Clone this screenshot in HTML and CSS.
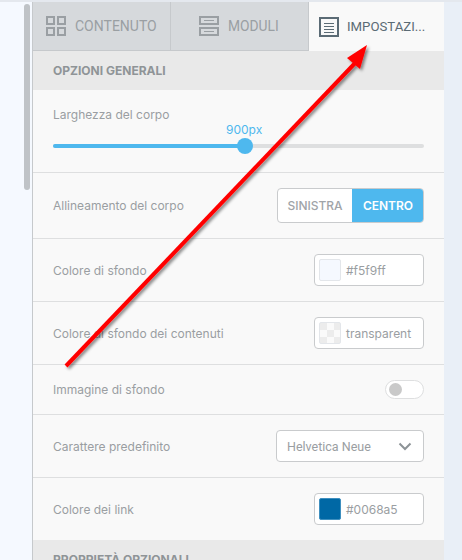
FILE: index.html
```html
<!DOCTYPE html>
<html lang="it">
<head>
<meta charset="utf-8">
<title>Impostazioni</title>
<link rel="stylesheet" href="styles.css">
</head>
<body>
<div class="page">
  <div class="gutter"><div class="scrollbar"></div></div>
  <div class="panel">
    <div class="tabs">
      <div class="tab tab-content">
        <svg class="tab-icon" width="20" height="20" viewBox="0 0 20 20"><g fill="none" stroke="#9a9fa3" stroke-width="2"><rect x="1" y="1" width="7" height="7"/><rect x="12" y="1" width="7" height="7"/><rect x="1" y="12" width="7" height="7"/><rect x="12" y="12" width="7" height="7"/></g></svg>
        <span>CONTENUTO</span>
      </div>
      <div class="tab tab-modules">
        <svg class="tab-icon" width="20" height="20" viewBox="0 0 20 20"><g fill="none" stroke="#9a9fa3" stroke-width="2"><rect x="1" y="1" width="18" height="7"/><rect x="1" y="12" width="18" height="7"/><path d="M5 4.5h10M5 15.5h10" stroke-width="1"/></g></svg>
        <span>MODULI</span>
      </div>
      <div class="tab tab-settings">
        <svg class="tab-icon" width="20" height="20" viewBox="0 0 20 20"><g fill="none" stroke="#5b6b75"><rect x="1" y="1" width="18" height="18" stroke-width="2"/><path d="M5 6.5h10M5 9.5h10M5 12.5h10M5 15.5h10" stroke-width="1"/></g></svg>
        <span>IMPOSTAZI...</span>
      </div>
    </div>

    <div class="section-head">OPZIONI GENERALI</div>

    <div class="row row-slider">
      <div class="label">Larghezza del corpo</div>
      <div class="slider">
        <div class="slider-value">900px</div>
        <div class="track"><div class="fill"></div><div class="thumb"></div></div>
      </div>
    </div>

    <div class="row row-align">
      <div class="label">Allineamento del corpo</div>
      <div class="segmented"><div class="seg">SINISTRA</div><div class="seg seg-on">CENTRO</div></div>
    </div>

    <div class="row row-std">
      <div class="label">Colore di sfondo</div>
      <div class="color"><span class="swatch swatch-light"></span><span>#f5f9ff</span></div>
    </div>

    <div class="row row-std">
      <div class="label">Colore di sfondo dei contenuti</div>
      <div class="color"><span class="swatch swatch-check"></span><span>transparent</span></div>
    </div>

    <div class="row row-toggle">
      <div class="label">Immagine di sfondo</div>
      <div class="toggle"><span class="knob"></span></div>
    </div>

    <div class="row row-std">
      <div class="label">Carattere predefinito</div>
      <div class="select"><span>Helvetica Neue</span>
        <svg width="14" height="9" viewBox="0 0 14 9"><path d="M1.5 1.5 7 7l5.5-5.5" fill="none" stroke="#8d9397" stroke-width="2"/></svg>
      </div>
    </div>

    <div class="row row-last">
      <div class="label">Colore dei link</div>
      <div class="color"><span class="swatch swatch-blue"></span><span>#0068a5</span></div>
    </div>

    <div class="section-head section-second">PROPRIETÀ OPZIONALI</div>
  </div>
  <div class="margin-right"></div>
</div>

<svg class="arrow" width="462" height="560" viewBox="0 0 462 560">
  <defs><filter id="sh" x="-10%" y="-10%" width="120%" height="120%"><feDropShadow dx="2" dy="2" stdDeviation="1.5" flood-color="#000" flood-opacity=".45"/></filter></defs>
  <g filter="url(#sh)">
    <path d="M66 366 358 60" stroke="#ff0000" stroke-width="4" fill="none"/>
    <path d="M367 45 347 58 360 69Z" fill="#ff0000"/>
  </g>
</svg>
</body>
</html>
```
FILE: styles.css
```css
* { box-sizing: border-box; }
html, body { margin: 0; padding: 0; }
body { width: 462px; height: 560px; overflow: hidden; background: #e9eff7; font-family: Inter, "Liberation Sans", sans-serif; position: relative; }
.page { display: flex; height: 560px; padding-top: 2px; background: linear-gradient(#e4e8ee, #e4e8ee) top / 100% 2px no-repeat; }
.gutter { width: 32px; flex: none; background: #f5f9ff; padding-left: 24px; }
.scrollbar { width: 6px; height: 186px; margin-top: 2px; background: #bfc3c7; border-radius: 3px; }
.panel { width: 412px; flex: none; background: #f9f9f9; border-left: 1px solid #c6c9cc; overflow: hidden; }
.margin-right { flex: 1; background: #e9eff7; }

.tabs { display: flex; height: 49px; }
.tab { display: flex; align-items: center; font-family: Roboto, sans-serif; font-size: 14px; color: #9a9fa3; background: #d6d9dc; border-bottom: 1px solid #c6c9cc; }
.tab-icon { flex: none; }
.tab-content { width: 138px; padding-left: 13px; gap: 9px; border-right: 1px solid #c6c9cc; }
.tab-modules { width: 138px; padding-left: 28px; gap: 9px; border-right: 1px solid #c6c9cc; font-size: 13.8px; }
.tab-settings { flex: 1; padding-left: 10px; gap: 8px; background: #f9f9f9; border-bottom: 0; color: #5b6b75; font-size: 13.2px; }

.section-head { height: 39px; display: flex; align-items: center; padding-left: 20px; background: #e9e9e9; font-size: 12px; font-weight: 700; color: #8f9497; }
.section-second { height: 39px; }

.row { display: flex; align-items: center; justify-content: space-between; padding: 0 20px; border-bottom: 1px solid #dedfe0; }
.label { font-size: 12px; line-height: 15px; color: #9a9ea2; }
.row-slider { height: 83px; display: block; padding-top: 17px; }
.row-align { height: 66px; }
.row-std { height: 63px; }
.row-toggle { height: 50px; }
.row-last { height: 62px; border-bottom: 0; }

.slider { position: relative; height: 30px; }
.slider-value { position: absolute; left: 173px; top: 0; font-size: 12px; color: #4eb8ee; line-height: 16px; }
.track { position: absolute; left: 0; right: 0; top: 22px; height: 4px; border-radius: 2px; background: #dedfe0; }
.fill { width: 192px; height: 4px; border-radius: 2px; background: #4eb8ee; }
.thumb { position: absolute; left: 184px; top: -6px; width: 16px; height: 16px; border-radius: 50%; background: #4eb8ee; }

.segmented { display: flex; height: 35px; font-size: 12px; font-weight: 500; border-radius: 4px; overflow: hidden; border: 1px solid #c9cbcd; background: #fff; }
.seg { display: flex; align-items: center; justify-content: center; width: 74px; color: #a0a4a8; }
.seg-on { width: 72px; margin: -1px -1px -1px 0; background: #4eb8ee; color: #fff; font-weight: 600; }

.color { width: 110px; height: 32px; display: flex; align-items: center; gap: 5px; padding-left: 4px; background: #fff; border: 1px solid #c9cbcd; border-radius: 4px; font-size: 12px; color: #9a9ea2; }
.swatch { width: 22px; height: 22px; flex: none; border: 1px solid #e3e6ea; border-radius: 2px; }
.swatch-light { background: #f5f9ff; }
.swatch-blue { background: #0068a5; border-color: #3e8fbf; }
.swatch-check { background: conic-gradient(#fafafa 25%, #ececec 0 50%, #fafafa 0 75%, #ececec 0) 0 0 / 14px 14px; }

.toggle { width: 39px; height: 19px; display: flex; align-items: center; padding-left: 3px; border: 1px solid #dedfe0; border-radius: 10px; background: #fff; }
.knob { width: 13px; height: 13px; border-radius: 50%; background: #c9c9c9; }

.select { width: 148px; height: 32px; display: flex; align-items: center; justify-content: space-between; padding: 0 11px 0 10px; background: #fff; border: 1px solid #c9cbcd; border-radius: 4px; font-family: Roboto, sans-serif; font-size: 12.5px; color: #9a9ea2; }

.arrow { position: absolute; left: 0; top: 0; pointer-events: none; }
```
